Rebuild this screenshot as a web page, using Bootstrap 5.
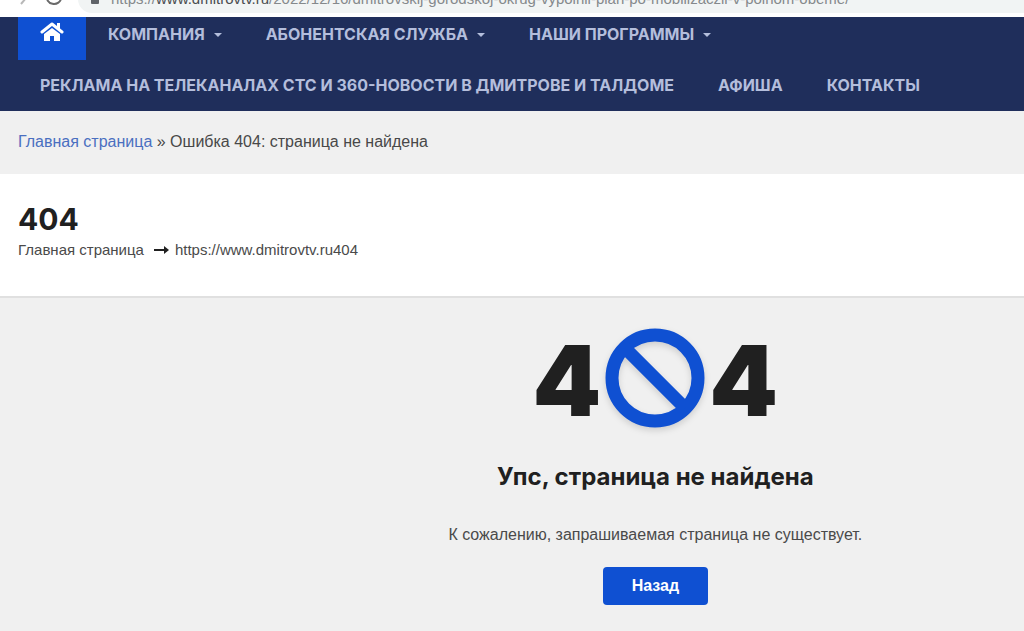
<!DOCTYPE html>
<html lang="ru">
<head>
<meta charset="utf-8">
<meta name="viewport" content="width=device-width, initial-scale=1">
<title>404 – страница не найдена</title>
<link href="https://cdn.jsdelivr.net/npm/bootstrap@5.3.0/dist/css/bootstrap.min.css" rel="stylesheet">
<style>
  :root { --brand: #0f50d2; --navy: #1f2e5b; --ink: #202020; }
  body { background: #f0f0f0; color: #4a4a4a; font-family: "Liberation Sans", Arial, sans-serif; font-size: 16px; line-height: 24px; }
  .browser-bar { background: #fff; height: 17px; padding-left: 16px; gap: 14px; overflow: hidden; }
  .browser-bar svg { flex: none; }
  .address { background: #f1f4f4; color: #85898c; height: 28px; font-size: 15px; line-height: 28px; margin-bottom: 4px; padding-left: 12px; gap: 11px; border-radius: 14px 0 0 14px; white-space: nowrap; }
  .address b { color: #4a4d50; font-weight: 400; }
  .site-nav { background: var(--navy); font-family: Inter, "Open Sans", sans-serif; font-size: 16px; font-weight: 700; padding: 0 18px; }
  .site-nav .nav { row-gap: 8px; }
  .site-nav .nav-link { color: #b4bedc; padding: 5px 22px 13px; line-height: 25px; }
  .site-nav .nav-home { background: var(--brand); color: #fff; }
  .site-nav .nav-home svg { display: block; margin-bottom: 5px; }
  .site-nav .dropdown-toggle::after { margin-left: 9px; border-width: 4px; border-bottom: 0; vertical-align: 3px; }
  .crumbs { padding: 19px 18px 20px; color: #484848; }
  .crumbs a { color: #4a6fc0; }
  .title-band { background: #fff; padding: 27px 18px 34px; border-bottom: 2px solid #e0e0e0; font-size: 15px; }
  .title-band a { color: inherit; }
  .title-band svg { margin: 0 6px 0 10px; }
  .display-type { font-family: Inter, "Open Sans", sans-serif; font-weight: 700; color: var(--ink); }
  .page-title { font-size: 30px; line-height: 37px; }
  .error-block { padding: 25px 0 24px 28%; }
  .error-code { font-size: 98px; line-height: 104px; font-weight: 900; gap: 4px; }
  .error-code span { padding-top: 6px; }
  .error-code svg { filter: drop-shadow(0 3px 3px rgba(0, 0, 0, .14)); }
  .error-title { font-size: 24px; line-height: 32px; margin: 28px 0 30px; }
  .error-text { margin-bottom: 20px; }
  .btn-back { --bs-btn-bg: var(--brand); --bs-btn-color: #fff; --bs-btn-hover-bg: #0b41ad; --bs-btn-hover-color: #fff; font-weight: 700; padding: 6px 28px; border-radius: 4px; }
</style>
</head>
<body>
<header>
  <div class="browser-bar d-flex align-items-end">
    <svg width="48" height="28" viewBox="0 0 48 28" fill="none" aria-hidden="true">
      <path d="M5 15L10 9L5 3" stroke="#b8b8b8" stroke-width="2"/>
      <path d="M45 9a7 6 0 1 1-3-5" stroke="#6a6a6a" stroke-width="2"/>
    </svg>
    <div class="address d-flex flex-grow-1 align-items-center">
      <svg width="10" height="14" viewBox="0 0 10 14" aria-hidden="true"><path d="M2 6V4a3 3 0 0 1 6 0v2" fill="none" stroke="#5f6368" stroke-width="2"/><rect x="1" y="4" width="8" height="8" rx="1" fill="#5f6368"/></svg>
      <span>https://<b>www.dmitrovtv.ru</b>/2022/12/16/dmitrovskij-gorodskoj-okrug-vypolnil-plan-po-mobilizaczii-v-polnom-obeme/</span>
    </div>
  </div>
  <nav class="site-nav">
    <ul class="nav">
      <li class="nav-item"><a class="nav-link nav-home" href="#" aria-label="Главная"><svg width="24" height="20" viewBox="0 0 24 20"><path fill="none" stroke="currentColor" stroke-width="3" stroke-linecap="round" stroke-linejoin="round" d="M2 10L12 2l10 8"/><path fill="currentColor" d="M17 1h3v7l-3-2zM12 6l8 6v7h-6v-5h-4v5H4v-7z"/></svg></a></li>
      <li class="nav-item"><a class="nav-link dropdown-toggle" href="#">КОМПАНИЯ</a></li>
      <li class="nav-item"><a class="nav-link dropdown-toggle" href="#">АБОНЕНТСКАЯ СЛУЖБА</a></li>
      <li class="nav-item"><a class="nav-link dropdown-toggle" href="#">НАШИ ПРОГРАММЫ</a></li>
      <li class="nav-item"><a class="nav-link" href="#">РЕКЛАМА НА ТЕЛЕКАНАЛАХ СТС И 360-НОВОСТИ В ДМИТРОВЕ И ТАЛДОМЕ</a></li>
      <li class="nav-item"><a class="nav-link" href="#">АФИША</a></li>
      <li class="nav-item"><a class="nav-link" href="#">КОНТАКТЫ</a></li>
    </ul>
  </nav>
</header>
<div class="crumbs"><a class="text-decoration-none" href="#">Главная страница</a> » Ошибка 404: страница не найдена</div>
<div class="title-band">
  <h1 class="display-type page-title mb-0">404</h1>
  <div class="d-flex align-items-center"><a class="text-decoration-none" href="#">Главная страница</a><svg width="15" height="10" viewBox="0 0 15 10" aria-hidden="true"><path fill="#202020" d="M0 4h10V1l5 4-5 4V6H0z"/></svg><span>https://www.dmitrovtv.ru404</span></div>
</div>
<main class="error-block text-center">
  <div class="error-code display-type d-flex justify-content-center align-items-center"><span>4</span><svg width="100" height="100" viewBox="0 0 100 100" role="img" aria-label="0"><g fill="none" stroke="#0f50d2" stroke-width="13"><circle cx="50" cy="50" r="43"/><path d="M20 20L80 80"/></g></svg><span>4</span></div>
  <h2 class="display-type error-title">Упс, страница не найдена</h2>
  <p class="error-text">К сожалению, запрашиваемая страница не существует.</p>
  <button type="button" class="btn btn-back">Назад</button>
</main>
<script src="https://cdn.jsdelivr.net/npm/bootstrap@5.3.0/dist/js/bootstrap.bundle.min.js"></script>
</body>
</html>
